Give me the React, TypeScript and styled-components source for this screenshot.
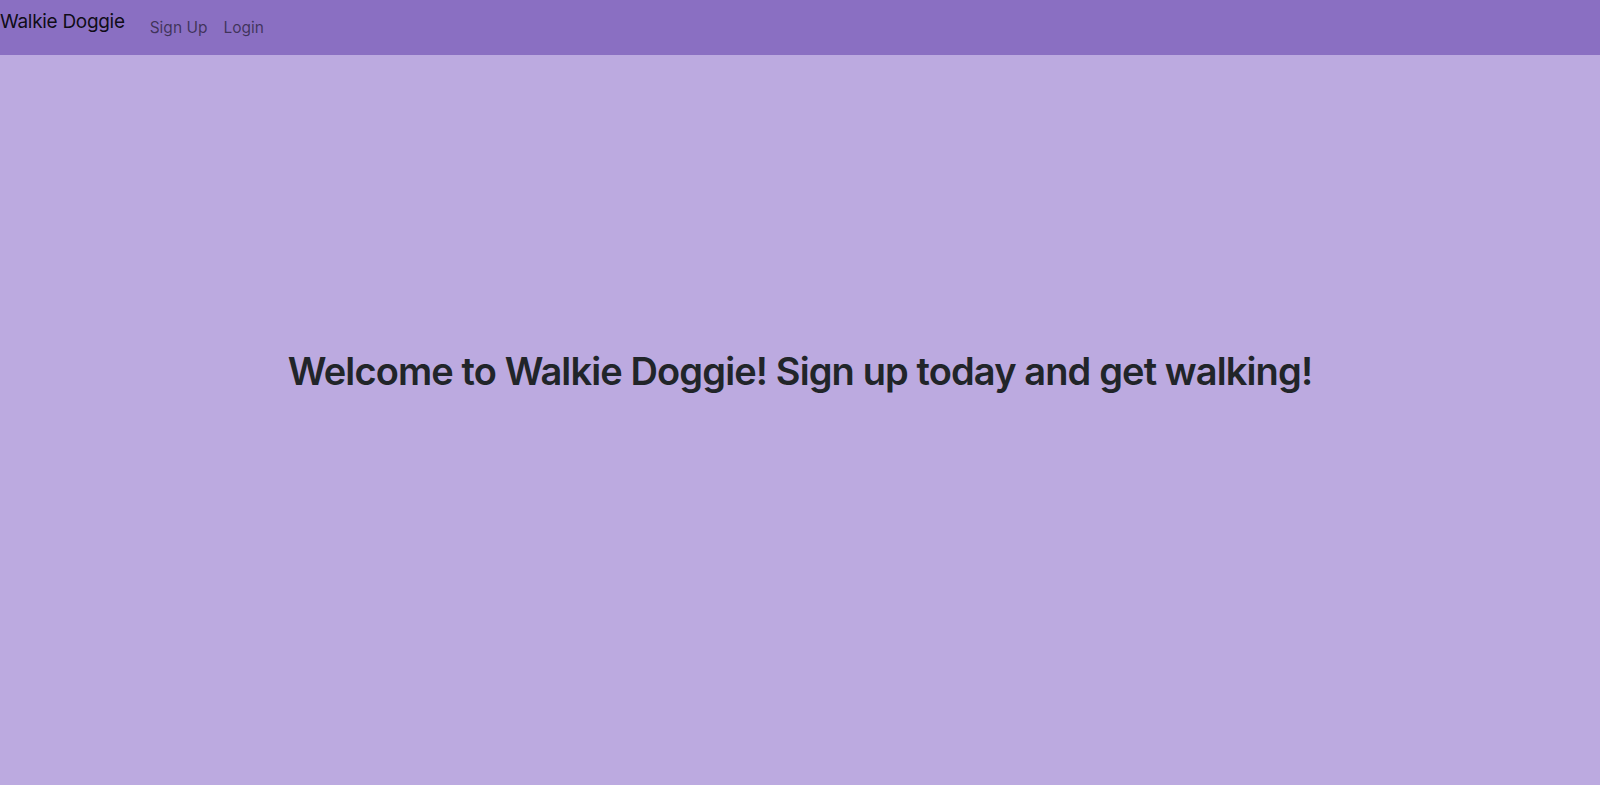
import React from "react";
import styled, { createGlobalStyle } from "styled-components";

const Global = createGlobalStyle`
  html, body { margin: 0; padding: 0; }
  body {
    background: #bcaae0;
    font-family: Inter, "Noto Sans", sans-serif;
    color: #212529;
    -webkit-font-smoothing: antialiased;
  }
`;

const Page = styled.div`
  min-height: 785px;
  display: flex;
  flex-direction: column;
  background: #bcaae0;
`;

const NavBar = styled.nav`
  height: 55px;
  background: #8a6fc2;
  display: flex;
  align-items: flex-start;
  box-sizing: border-box;
`;

const Brand = styled.a`
  font-size: 19px;
  line-height: 24px;
  letter-spacing: -0.3px;
  color: rgba(0, 0, 0, 0.9);
  text-decoration: none;
  padding-top: 10px;
  margin-right: 17px;
  white-space: nowrap;
`;

const NavLinks = styled.div`
  display: flex;
  padding-top: 16px;
`;

const NavLink = styled.a`
  font-size: 15.5px;
  line-height: 24px;
  color: rgba(0, 0, 0, 0.55);
  text-decoration: none;
  padding: 0 8px;
`;

const Hero = styled.main`
  flex: 1;
  display: flex;
  justify-content: center;
  padding-top: 292px;
`;

const Heading = styled.h1`
  margin: 0;
  font-size: 38px;
  line-height: 48px;
  letter-spacing: -0.88px;
  font-weight: 580;
  color: #212529;
`;

export default function App() {
  return (
    <>
      <Global />
      <Page>
        <NavBar>
          <Brand href="#">Walkie Doggie</Brand>
          <NavLinks>
            <NavLink href="#">Sign Up</NavLink>
            <NavLink href="#">Login</NavLink>
          </NavLinks>
        </NavBar>
        <Hero>
          <Heading>Welcome to Walkie Doggie! Sign up today and get walking!</Heading>
        </Hero>
      </Page>
    </>
  );
}
